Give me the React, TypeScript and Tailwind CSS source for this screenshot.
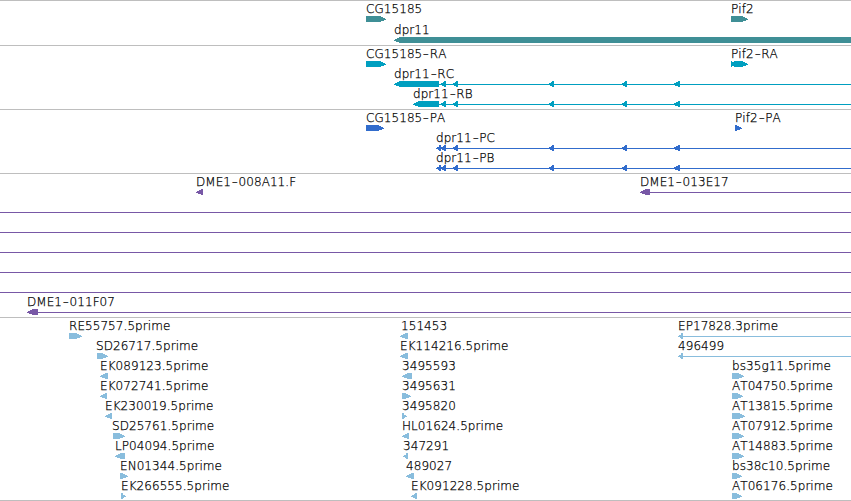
import React from 'react';

type Direction = 'left' | 'right';

interface Glyph {
  start: number;
  end: number;
  dir: Direction;
  notched?: boolean;
}

interface Feature {
  label?: string;
  labelX?: number;
  glyphs?: Glyph[];
  line?: number;
}

interface Track {
  id: string;
  color: string;
  className: string;
  rows: Feature[][];
}

const VIEW_END = 851;

const right = (label: string, start: number, end: number, labelX = start): Feature => ({
  label,
  labelX,
  glyphs: [{ start, end, dir: 'right' }],
});

const left = (label: string, start: number, end: number, line?: number, labelX = start): Feature => ({
  label,
  labelX,
  glyphs: [{ start, end, dir: 'left' }],
  line,
});

const exons: Glyph[] = [
  { start: 440, end: 446, dir: 'left' },
  { start: 452, end: 458, dir: 'left' },
  { start: 548, end: 554, dir: 'left' },
  { start: 621, end: 627, dir: 'left' },
  { start: 673, end: 680, dir: 'left' },
];

const spliced = (label: string, start: number, end: number): Feature => ({
  label,
  labelX: start,
  glyphs: [{ start, end, dir: 'left' }, ...exons],
  line: end,
});

const tracks: Track[] = [
  {
    id: 'gene',
    color: '#3f8f96',
    className: 'gap-px pb-[3px]',
    rows: [
      [right('CG15185', 366, 386), right('Pif2', 731, 748)],
      [left('dpr11', 394, VIEW_END)],
    ],
  },
  {
    id: 'transcript',
    color: '#009fc0',
    className: 'pb-[3px]',
    rows: [
      [
        right('CG15185-RA', 366, 386),
        { label: 'Pif2-RA', labelX: 731, glyphs: [{ start: 731, end: 748, dir: 'right', notched: true }] },
      ],
      [spliced('dpr11-RC', 394, 439)],
      [spliced('dpr11-RB', 413, 439)],
    ],
  },
  {
    id: 'cds',
    color: '#316ccc',
    className: 'pb-[3px]',
    rows: [
      [right('CG15185-PA', 366, 384), right('Pif2-PA', 735, 742)],
      [spliced('dpr11-PC', 436, 441)],
      [spliced('dpr11-PB', 436, 441)],
    ],
  },
  {
    id: 'bac',
    color: '#7858a6',
    className: 'pb-[3px]',
    rows: [
      [left('DME1-008A11.F', 196, 203), left('DME1-013E17', 640, 650, 650)],
      [{ line: 0 }],
      [{ line: 0 }],
      [{ line: 0 }],
      [{ line: 0 }],
      [{ line: 0 }],
      [left('DME1-011F07', 27, 38, 38)],
    ],
  },
  {
    id: 'est',
    color: '#89bddd',
    className: 'pb-[2px]',
    rows: [
      [right('RE55757.5prime', 69, 82), left('151453', 400, 408, undefined, 401), left('EP17828.3prime', 678, 683, 683)],
      [right('SD26717.5prime', 97, 108, 96), left('EK114216.5prime', 400, 408), left('496499', 678, 683, 683)],
      [left('EK089123.5prime', 100, 108), left('3495593', 402, 412), right('bs35g11.5prime', 732, 744)],
      [left('EK072741.5prime', 100, 107), right('3495631', 402, 411), right('AT04750.5prime', 732, 743)],
      [left('EK230019.5prime', 105, 112), right('3495820', 402, 407), right('AT13815.5prime', 732, 745)],
      [right('SD25761.5prime', 113, 125, 112), left('HL01624.5prime', 402, 409), right('AT07912.5prime', 732, 744)],
      [left('LP04094.5prime', 115, 125), left('347291', 403, 408), right('AT14883.5prime', 732, 744)],
      [right('EN01344.5prime', 120, 128), left('489027', 406, 414), right('bs38c10.5prime', 732, 742)],
      [right('EK266555.5prime', 121, 126), left('EK091228.5prime', 411, 417), right('AT06176.5prime', 732, 742)],
    ],
  },
];

// How far each of the six pixel rows stops short of the tip
const headInset = [5, 3, 1, 0, 2, 5];

const glyphPath = ({ start, end, dir, notched }: Glyph) => {
  const width = end - start;
  return headInset
    .map((inset, i) => {
      const length = width - Math.min(inset, width - 2);
      const x = dir === 'right' ? start : end - length;
      if (notched && (i === 0 || i === 5)) {
        return `M${x} ${15 + i}h1v1h-1zM${x + 3} ${15 + i}h${length - 3}v1h${3 - length}z`;
      }
      return `M${x} ${15 + i}h${length}v1h${-length}z`;
    })
    .join('');
};

const Label: React.FC<{ text: string; x: number }> = ({ text, x }) => {
  const [name, suffix] = text.split('-');
  return (
    <span className="absolute top-0 leading-4 whitespace-nowrap" style={{ left: x }}>
      {name}
      {suffix && (
        <>
          <span className="inline-block w-[7.5px] scale-x-[1.4] text-center">-</span>
          {suffix}
        </>
      )}
    </span>
  );
};

const Row: React.FC<{ features: Feature[]; color: string }> = ({ features, color }) => (
  <div className="relative h-5 shrink-0">
    <svg className="block overflow-visible" width={VIEW_END} height="20" fill={color} shapeRendering="crispEdges">
      {features.map((f, i) => (
        <g key={i}>
          {f.line !== undefined && <rect x={f.line} y="18" width={VIEW_END - f.line} height="1" />}
          {f.glyphs?.map((g, j) => <path key={j} d={glyphPath(g)} />)}
        </g>
      ))}
    </svg>
    {features.map((f) => f.label && <Label key={f.label} text={f.label} x={f.labelX ?? 0} />)}
  </div>
);

export default function App() {
  return (
    <main className="h-[501px] w-[851px] overflow-hidden bg-white font-['DejaVu_Sans',sans-serif] text-[12px] font-extralight tracking-[0.06px] text-black [-webkit-text-stroke:0.25px_black] [font-kerning:none]">
      {tracks.map((track) => (
        <section
          key={track.id}
          className={`flex flex-col border-t border-[#bebebe] last:border-b ${track.className}`}
        >
          {track.rows.map((features, i) => (
            <Row key={i} features={features} color={track.color} />
          ))}
        </section>
      ))}
    </main>
  );
}
